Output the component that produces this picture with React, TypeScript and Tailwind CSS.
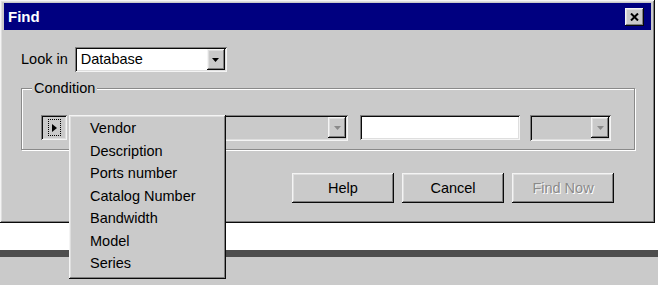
const raised =
  "shadow-[inset_-1px_-1px_0_#0a0a0a,inset_1px_1px_0_#f4f4f4,inset_-2px_-2px_0_#808080,inset_2px_2px_0_#dedede]";
const sunken =
  "shadow-[inset_1px_1px_0_#808080,inset_-1px_-1px_0_#f4f4f4,inset_2px_2px_0_#0a0a0a,inset_-2px_-2px_0_#dedede]";

function Arrow({ disabled }: { disabled?: boolean }) {
  return (
    <div
      className={`mr-[2px] flex h-[21px] w-[18px] shrink-0 items-center justify-center bg-[#cacaca] ${raised}`}
    >
      <svg width="7" height="4" viewBox="0 0 7 4">
        <path d="M0 0h7L3.5 4z" fill={disabled ? "#8a8a8a" : "#000"} />
      </svg>
    </div>
  );
}

function ClassicButton({ label, disabled }: { label: string; disabled?: boolean }) {
  return (
    <button
      type="button"
      className={`flex h-[30px] w-[102px] items-center justify-center bg-[#cacaca] ${raised} ${
        disabled ? "text-[#8a8a8a] [text-shadow:1px_1px_0_#fff]" : "text-black"
      }`}
    >
      {label}
    </button>
  );
}

const fields = [
  "Vendor",
  "Description",
  "Ports number",
  "Catalog Number",
  "Bandwidth",
  "Model",
  "Series",
];

export default function App() {
  return (
    <div className="relative h-[285px] w-[658px] overflow-hidden bg-white font-['Liberation_Sans',Arial,sans-serif] text-[14.5px] leading-none text-black">
      <div
        className={`flex h-[223px] w-[655px] flex-col bg-[#cacaca] px-[4px] pt-[3px] ${raised}`}
      >
        <div className="flex h-[27px] shrink-0 items-center justify-between bg-[#000080] pl-[4px] pr-[7px]">
          <span className="text-[15px] font-bold text-white">Find</span>
          <div className={`flex h-[18px] w-[19px] items-center justify-center bg-[#cacaca] ${raised}`}>
            <svg width="9" height="8" viewBox="0 0 9 8">
              <path d="M1 0.5l7 7M8 0.5l-7 7" stroke="#000" strokeWidth="2" />
            </svg>
          </div>
        </div>

        <div className="ml-[17px] mt-[17px] flex h-[25px] items-center gap-[7px]">
          <span>Look in</span>
          <div className={`flex h-[25px] w-[152px] items-center justify-between bg-white pl-[6px] ${sunken}`}>
            <span>Database</span>
            <Arrow />
          </div>
        </div>

        <div className="relative ml-[17px] mt-[16px] h-[62px] w-[614px] border border-[#8a8a8a] shadow-[1px_1px_0_#fff,inset_1px_1px_0_#fff]">
          <span className="absolute -top-[8px] left-[10px] bg-[#cacaca] px-[2px]">Condition</span>
          <div className="ml-[19px] mt-[25px] flex h-[27px] items-center">
            <div className={`flex h-[25px] w-[26px] items-center justify-center bg-[#cacaca] ${sunken}`}>
              <div className="flex h-[17px] w-[13px] items-center justify-center border border-dotted border-black">
                <svg width="5" height="8" viewBox="0 0 5 8">
                  <path d="M0 0l5 4-5 4z" fill="#000" />
                </svg>
              </div>
            </div>
            <div className={`ml-[2px] flex h-[26px] w-[279px] items-center justify-end bg-[#cacaca] ${sunken}`}>
              <Arrow disabled />
            </div>
            <div className={`ml-[12px] h-[25px] w-[160px] bg-white ${sunken}`} />
            <div className={`ml-[10px] flex h-[26px] w-[81px] items-center justify-end bg-[#cacaca] ${sunken}`}>
              <Arrow disabled />
            </div>
          </div>
        </div>

        <div className="ml-[288px] mt-[23px] flex gap-[8px]">
          <ClassicButton label="Help" />
          <ClassicButton label="Cancel" />
          <ClassicButton label="Find Now" disabled />
        </div>
      </div>

      <div className="h-[27px] bg-white" />
      <div className="h-[7px] bg-[#4e4e4e]" />
      <div className="h-[28px] bg-[#cacaca]" />

      <div
        className={`absolute left-[69px] top-[115px] flex h-[164px] w-[157px] flex-col bg-[#cacaca] pb-[3px] pt-[2px] ${raised}`}
      >
        {fields.map((f) => (
          <div key={f} className="flex h-[22.5px] items-center pl-[21px]">
            {f}
          </div>
        ))}
      </div>
    </div>
  );
}
